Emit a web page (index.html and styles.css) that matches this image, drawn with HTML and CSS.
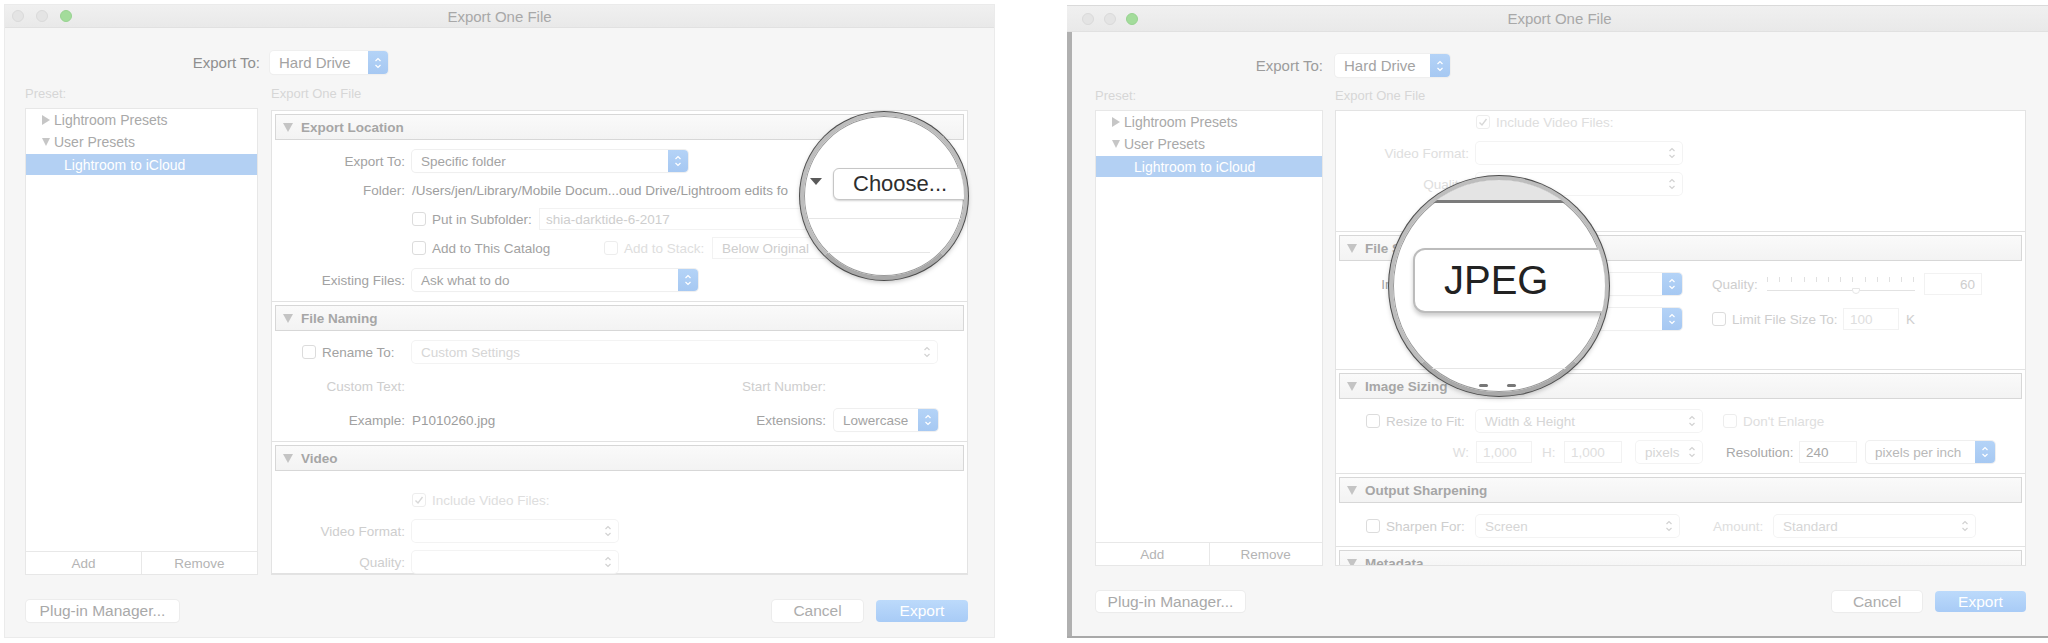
FILE: index.html
```html
<!DOCTYPE html>
<html lang="en">
<head>
    <meta charset="UTF-8">
    <title>Export One File</title>
    <link rel="stylesheet" href="styles.css">
</head>
<body>
<div class="screen">

    <!-- left dialog: export location -->
    <div class="window win-left">
        <div class="titlebar">
            <div class="lights"><i class="light"></i><i class="light"></i><i class="light green"></i></div>
            <div class="title">Export One File</div>
            <div></div>
        </div>
        <div class="win-body">
            <div class="export-to">
                <span class="lbl-top">Export To:</span>
                <div class="popup big"><span class="txt">Hard Drive</span><span class="stepper blue"><svg class="chev" viewBox="0 0 8 14"><path d="M1.5 5 4 2.5 6.5 5M1.5 9 4 11.5 6.5 9"/></svg></span></div>
            </div>
            <div class="columns">
                <div class="preset-col">
                    <div class="caption">Preset:</div>
                    <div class="preset-box">
                        <div class="tree">
                            <div class="tree-row"><i class="tri-right"></i>Lightroom Presets</div>
                            <div class="tree-row"><i class="tri-small"></i>User Presets</div>
                            <div class="tree-row selected">Lightroom to iCloud</div>
                        </div>
                        <div class="preset-btns"><span>Add</span><span>Remove</span></div>
                    </div>
                </div>
                <div class="main-col">
                    <div class="caption">Export One File</div>
                    <div class="panel">
                        <div class="section">
                            <div class="sec-head"><i class="tri-down"></i>Export Location</div>
                            <div class="sec-body loc">
                                <div class="row">
                                    <span class="lbl">Export To:</span>
                                    <div class="popup w276"><span class="txt">Specific folder</span><span class="stepper blue"><svg class="chev" viewBox="0 0 8 14"><path d="M1.5 5 4 2.5 6.5 5M1.5 9 4 11.5 6.5 9"/></svg></span></div>
                                </div>
                                <div class="row">
                                    <span class="lbl">Folder:</span>
                                    <span class="path">/Users/jen/Library/Mobile Docum...oud Drive/Lightroom edits fo</span>
                                </div>
                                <div class="row">
                                    <span class="lbl"></span>
                                    <i class="cb"></i><span class="cb-text sub-text">Put in Subfolder:</span>
                                    <div class="field sub-field dim">shia-darktide-6-2017</div>
                                </div>
                                <div class="row">
                                    <span class="lbl"></span>
                                    <i class="cb"></i><span class="cb-text cat-text">Add to This Catalog</span>
                                    <i class="cb faint-box"></i><span class="cb-text stack-text faint">Add to Stack:</span>
                                    <div class="field below-field dim">Below Original</div>
                                </div>
                                <div class="row push">
                                    <span class="lbl">Existing Files:</span>
                                    <div class="popup w286"><span class="txt">Ask what to do</span><span class="stepper blue"><svg class="chev" viewBox="0 0 8 14"><path d="M1.5 5 4 2.5 6.5 5M1.5 9 4 11.5 6.5 9"/></svg></span></div>
                                </div>
                            </div>
                        </div>
                        <div class="section">
                            <div class="sec-head"><i class="tri-down"></i>File Naming</div>
                            <div class="sec-body naming">
                                <div class="row">
                                    <span class="lbl cb-lbl"><i class="cb"></i><span class="cb-text">Rename To:</span></span>
                                    <div class="popup w525 off"><span class="txt">Custom Settings</span><span class="stepper"><svg class="chev" viewBox="0 0 8 14"><path d="M1.5 5 4 2.5 6.5 5M1.5 9 4 11.5 6.5 9"/></svg></span></div>
                                </div>
                                <div class="row">
                                    <span class="lbl dim">Custom Text:</span>
                                    <span class="spacer"></span>
                                    <span class="lbl2 dim">Start Number:</span>
                                    <span class="blank w104 row-end"></span>
                                </div>
                                <div class="row">
                                    <span class="lbl">Example:</span>
                                    <span class="value">P1010260.jpg</span>
                                    <span class="spacer"></span>
                                    <span class="lbl2">Extensions:</span>
                                    <div class="popup w104 row-end"><span class="txt">Lowercase</span><span class="stepper blue"><svg class="chev" viewBox="0 0 8 14"><path d="M1.5 5 4 2.5 6.5 5M1.5 9 4 11.5 6.5 9"/></svg></span></div>
                                </div>
                            </div>
                        </div>
                        <div class="section">
                            <div class="sec-head"><i class="tri-down"></i>Video</div>
                            <div class="sec-body video">
                                <div class="row">
                                    <span class="lbl"></span>
                                    <i class="cb faint-box checked"><svg viewBox="0 0 12 12"><path d="M2.5 6.5 5 9 9.5 3"/></svg></i><span class="cb-text faint">Include Video Files:</span>
                                </div>
                                <div class="row">
                                    <span class="lbl dim">Video Format:</span>
                                    <div class="popup w206 off"><span class="txt"></span><span class="stepper"><svg class="chev" viewBox="0 0 8 14"><path d="M1.5 5 4 2.5 6.5 5M1.5 9 4 11.5 6.5 9"/></svg></span></div>
                                </div>
                                <div class="row">
                                    <span class="lbl dim">Quality:</span>
                                    <div class="popup w206 off"><span class="txt"></span><span class="stepper"><svg class="chev" viewBox="0 0 8 14"><path d="M1.5 5 4 2.5 6.5 5M1.5 9 4 11.5 6.5 9"/></svg></span></div>
                                </div>
                            </div>
                        </div>
                    </div>
                </div>
            </div>
            <div class="footer">
                <div class="btn plugin">Plug-in Manager...</div>
                <div class="btn cancel">Cancel</div>
                <div class="btn export">Export</div>
            </div>
        </div>

        <div class="loupe loupe-choose">
            <i class="loupe-tri"></i>
            <div class="loupe-btn">Choose...</div>
            <i class="loupe-line l1"></i>
            <i class="loupe-line l2"></i>
        </div>
    </div>

    <!-- right dialog: scrolled to file settings -->
    <div class="window win-right">
        <div class="titlebar">
            <div class="lights"><i class="light"></i><i class="light"></i><i class="light green"></i></div>
            <div class="title">Export One File</div>
            <div></div>
        </div>
        <div class="win-body">
            <div class="export-to">
                <span class="lbl-top">Export To:</span>
                <div class="popup big"><span class="txt">Hard Drive</span><span class="stepper blue"><svg class="chev" viewBox="0 0 8 14"><path d="M1.5 5 4 2.5 6.5 5M1.5 9 4 11.5 6.5 9"/></svg></span></div>
            </div>
            <div class="columns">
                <div class="preset-col">
                    <div class="caption">Preset:</div>
                    <div class="preset-box">
                        <div class="tree">
                            <div class="tree-row"><i class="tri-right"></i>Lightroom Presets</div>
                            <div class="tree-row"><i class="tri-small"></i>User Presets</div>
                            <div class="tree-row selected">Lightroom to iCloud</div>
                        </div>
                        <div class="preset-btns"><span>Add</span><span>Remove</span></div>
                    </div>
                </div>
                <div class="main-col">
                    <div class="caption">Export One File</div>
                    <div class="panel">
                        <div class="section top-cut">
                            <div class="sec-body video-tail">
                                <div class="row">
                                    <span class="lbl"></span>
                                    <i class="cb faint-box checked"><svg viewBox="0 0 12 12"><path d="M2.5 6.5 5 9 9.5 3"/></svg></i><span class="cb-text faint">Include Video Files:</span>
                                </div>
                                <div class="row">
                                    <span class="lbl faint">Video Format:</span>
                                    <div class="popup w206 off"><span class="txt"></span><span class="stepper"><svg class="chev" viewBox="0 0 8 14"><path d="M1.5 5 4 2.5 6.5 5M1.5 9 4 11.5 6.5 9"/></svg></span></div>
                                </div>
                                <div class="row">
                                    <span class="lbl faint">Quality:</span>
                                    <div class="popup w206 off"><span class="txt"></span><span class="stepper"><svg class="chev" viewBox="0 0 8 14"><path d="M1.5 5 4 2.5 6.5 5M1.5 9 4 11.5 6.5 9"/></svg></span></div>
                                </div>
                            </div>
                        </div>
                        <div class="section">
                            <div class="sec-head"><i class="tri-down"></i>File Settings</div>
                            <div class="sec-body settings">
                                <div class="row">
                                    <span class="lbl">Image Format:</span>
                                    <div class="popup w206"><span class="txt"></span><span class="stepper blue"><svg class="chev" viewBox="0 0 8 14"><path d="M1.5 5 4 2.5 6.5 5M1.5 9 4 11.5 6.5 9"/></svg></span></div>
                                    <span class="q-lbl dim">Quality:</span>
                                    <div class="slider"><i class="thumb" style="left: 60%"></i></div>
                                    <div class="field num dim">60</div>
                                </div>
                                <div class="row">
                                    <span class="lbl"></span>
                                    <div class="popup w206"><span class="txt"></span><span class="stepper blue"><svg class="chev" viewBox="0 0 8 14"><path d="M1.5 5 4 2.5 6.5 5M1.5 9 4 11.5 6.5 9"/></svg></span></div>
                                    <i class="cb lim-cb"></i><span class="cb-text lim-text dim">Limit File Size To:</span>
                                    <div class="field k-field faint">100</div>
                                    <span class="unit dim">K</span>
                                </div>
                            </div>
                        </div>
                        <div class="section">
                            <div class="sec-head"><i class="tri-down"></i>Image Sizing</div>
                            <div class="sec-body sizing">
                                <div class="row">
                                    <span class="lbl cb-lbl"><i class="cb"></i><span class="cb-text dim">Resize to Fit:</span></span>
                                    <div class="popup w226 off"><span class="txt">Width &amp; Height</span><span class="stepper"><svg class="chev" viewBox="0 0 8 14"><path d="M1.5 5 4 2.5 6.5 5M1.5 9 4 11.5 6.5 9"/></svg></span></div>
                                    <i class="cb faint-box enlarge-cb"></i><span class="cb-text faint">Don't Enlarge</span>
                                </div>
                                <div class="row">
                                    <span class="lbl faint">W:</span>
                                    <div class="field w56 faint">1,000</div>
                                    <span class="h-lbl faint">H:</span>
                                    <div class="field w58 faint">1,000</div>
                                    <div class="popup w66 off px"><span class="txt">pixels</span><span class="stepper"><svg class="chev" viewBox="0 0 8 14"><path d="M1.5 5 4 2.5 6.5 5M1.5 9 4 11.5 6.5 9"/></svg></span></div>
                                    <span class="res-lbl">Resolution:</span>
                                    <div class="field w58 res-field">240</div>
                                    <div class="popup w129 ppi"><span class="txt">pixels per inch</span><span class="stepper blue"><svg class="chev" viewBox="0 0 8 14"><path d="M1.5 5 4 2.5 6.5 5M1.5 9 4 11.5 6.5 9"/></svg></span></div>
                                </div>
                            </div>
                        </div>
                        <div class="section">
                            <div class="sec-head"><i class="tri-down"></i>Output Sharpening</div>
                            <div class="sec-body sharpen">
                                <div class="row">
                                    <span class="lbl cb-lbl"><i class="cb"></i><span class="cb-text dim">Sharpen For:</span></span>
                                    <div class="popup w203 off"><span class="txt">Screen</span><span class="stepper"><svg class="chev" viewBox="0 0 8 14"><path d="M1.5 5 4 2.5 6.5 5M1.5 9 4 11.5 6.5 9"/></svg></span></div>
                                    <span class="amt-lbl faint">Amount:</span>
                                    <div class="popup w201 off"><span class="txt">Standard</span><span class="stepper"><svg class="chev" viewBox="0 0 8 14"><path d="M1.5 5 4 2.5 6.5 5M1.5 9 4 11.5 6.5 9"/></svg></span></div>
                                </div>
                            </div>
                        </div>
                        <div class="section">
                            <div class="sec-head"><i class="tri-down"></i>Metadata</div>
                        </div>
                    </div>
                </div>
            </div>
            <div class="footer">
                <div class="btn plugin">Plug-in Manager...</div>
                <div class="btn cancel">Cancel</div>
                <div class="btn export">Export</div>
            </div>
        </div>

        <div class="loupe loupe-jpeg">
            <i class="lj-band"></i>
            <div class="loupe-btn big">JPEG</div>
            <i class="loupe-line l3"></i>
            <i class="lj-mark m1"></i>
            <i class="lj-mark m2"></i>
        </div>
    </div>

</div>
</body>
</html>
```

FILE: styles.css
```css
* {
    box-sizing: border-box;
}
html, body {
    margin: 0;
}
body {
    width: 2048px;
    height: 643px;
    overflow: hidden;
    background-color: #fff;
    font-family: "Liberation Sans", Arial, sans-serif;
    font-size: 13.5px;
    color: #a2a2a2;
}
.screen {
    display: flex;
    align-items: flex-start;
}

/* windows */
.window {
    position: relative;
    flex-shrink: 0;
    display: flex;
    flex-direction: column;
    background-color: #f6f6f6;
}
.win-left {
    margin: 4px 0 0 4px;
    width: 991px;
    height: 634px;
    border: 1px solid #ebebeb;
}
.win-right {
    margin: 5px 0 0 72px;
    width: 985px;
    height: 633px;
    border-top: 1px solid #dadada;
    border-bottom: 2px solid #a9a9a9;
}
.titlebar {
    display: grid;
    grid-template-columns: 1fr auto 1fr;
    align-items: center;
    height: 23px;
    background: linear-gradient(#f0f0f0, #e9e9e9);
    border-bottom: 1px solid #e1e1e1;
    flex-shrink: 0;
}
.win-right .titlebar {
    height: 26px;
}
.lights {
    display: flex;
    gap: 12px;
    padding-left: 7px;
}
.win-right .lights {
    gap: 10px;
    padding-left: 15px;
}
.light {
    width: 12px;
    height: 12px;
    border-radius: 50%;
    background-color: #e4e4e4;
    border: 1px solid #dadada;
}
.light.green {
    background-color: #a3dc9b;
    border-color: #98d391;
}
.title {
    font-size: 15px;
    color: #a8a8a8;
}
.win-body {
    flex: 1;
    display: flex;
    flex-direction: column;
    padding: 23px 26px 0 20px;
}
.win-right .win-body {
    padding: 22px 26px 0 23px;
    border-left: 5px solid #b0b0b0;
}

/* export to */
.export-to {
    display: flex;
    align-items: center;
    gap: 10px;
    height: 23px;
}
.win-right .export-to {
    gap: 12px;
}
.lbl-top {
    width: 235px;
    text-align: right;
    font-size: 15px;
    color: #8f8f8f;
}
.win-right .lbl-top {
    width: 228px;
    color: #9c9c9c;
}
.popup.big {
    width: 118px;
    height: 23px;
    font-size: 15px;
}
.win-right .popup.big {
    width: 115px;
}

/* columns */
.columns {
    display: flex;
    gap: 13px;
    height: 489px;
    margin-top: 12px;
}
.win-right .columns {
    gap: 12px;
    height: 478px;
    margin-top: 11px;
}
.preset-col {
    width: 233px;
    display: flex;
    flex-direction: column;
}
.win-right .preset-col {
    width: 228px;
}
.main-col {
    flex: 1;
    display: flex;
    flex-direction: column;
}
.caption {
    height: 16px;
    line-height: 16px;
    font-size: 13px;
    color: #d6d6d6;
    margin-bottom: 6px;
}
.main-col .caption {
    margin-bottom: 8px;
}
.win-right .main-col .caption {
    margin-bottom: 6px;
}

/* preset list */
.preset-box {
    flex: 1;
    display: flex;
    flex-direction: column;
    background-color: #fff;
    border: 1px solid #e7e7e7;
}
.tree {
    flex: 1;
    font-size: 14px;
}
.tree-row {
    height: 22px;
    display: flex;
    align-items: center;
    gap: 4px;
    padding-left: 16px;
    color: #a9a9a9;
}
.tree-row.selected {
    background-color: #b3d0f3;
    color: #fff;
    padding-left: 38px;
    height: 21px;
    margin-top: 1px;
}
.tri-right {
    width: 0;
    height: 0;
    border-top: 5px solid transparent;
    border-bottom: 5px solid transparent;
    border-left: 8px solid #c6c6c6;
}
.tri-small {
    width: 0;
    height: 0;
    border-left: 4.5px solid transparent;
    border-right: 4.5px solid transparent;
    border-top: 8px solid #c6c6c6;
}
.preset-btns {
    display: flex;
    height: 23px;
    border-top: 1px solid #e8e8e8;
    color: #b4b4b4;
}
.preset-btns span {
    flex: 1;
    display: flex;
    align-items: center;
    justify-content: center;
}
.preset-btns span + span {
    border-left: 1px solid #e8e8e8;
}

/* right panel */
.panel {
    flex: 1;
    overflow: hidden;
    background-color: #fff;
    border: 1px solid #e3e3e3;
}
.section {
    padding-top: 3px;
    border-bottom: 1px solid #e2e2e2;
}
.section.top-cut {
    padding-top: 0;
}
.sec-head {
    height: 26px;
    margin: 0 3px;
    display: flex;
    align-items: center;
    gap: 8px;
    padding-left: 7px;
    background: linear-gradient(#fafafa, #f3f3f3);
    border: 1px solid #d7d7d7;
    font-weight: bold;
    color: #a6a6a6;
}
.tri-down {
    width: 0;
    height: 0;
    border-left: 5.5px solid transparent;
    border-right: 5.5px solid transparent;
    border-top: 9px solid #c4c4c4;
}
.sec-body {
    display: flex;
    flex-direction: column;
}
.sec-body.loc {
    padding: 10px 0 10px;
    gap: 7px;
}
.sec-body.naming {
    padding: 10px 0 10px;
    gap: 12px;
}
.sec-body.video {
    padding: 18px 0 0;
    gap: 9px;
}
.sec-body.video-tail {
    padding: 0 0 36px;
    gap: 9px;
}
.sec-body.settings {
    padding: 12px 0 39px;
    gap: 13px;
}
.sec-body.sizing {
    padding: 11px 0 10px;
    gap: 9px;
}
.sec-body.sharpen {
    padding: 12px 0 9px;
}
.row {
    display: flex;
    align-items: center;
    height: 22px;
    white-space: nowrap;
}
.row.push {
    margin-top: 3px;
}
.lbl {
    width: 133px;
    margin-right: 7px;
    flex-shrink: 0;
    text-align: right;
}
.lbl.cb-lbl {
    display: flex;
    align-items: center;
    padding-left: 30px;
    text-align: left;
}
.lbl2 {
    margin-right: 8px;
}
.spacer {
    flex: 1;
}
.row-end {
    margin-right: 29px;
}
.blank {
    height: 22px;
}
.path, .value {
    color: #9d9d9d;
}

/* controls */
.popup {
    display: flex;
    align-items: stretch;
    height: 22px;
    background-color: #fff;
    border-radius: 4px;
    box-shadow: 0 0 0 1px #efefef, 0 1px 1px rgba(0, 0, 0, 0.05);
    color: #a3a3a3;
}
.popup .txt {
    flex: 1;
    display: flex;
    align-items: center;
    padding-left: 9px;
    overflow: hidden;
}
.popup.off {
    box-shadow: 0 0 0 1px #f3f3f3;
}
.popup.off .txt {
    color: #d6d6d6;
}
.stepper {
    width: 20px;
    display: flex;
    align-items: center;
    justify-content: center;
    color: #d2d2d2;
}
.stepper.blue {
    background: linear-gradient(#b4d3f7, #a6c8f2);
    color: #fff;
    border-radius: 0 4px 4px 0;
}
.chev {
    width: 8px;
    height: 14px;
    fill: none;
    stroke: currentColor;
    stroke-width: 1.2;
}
.w276 { width: 276px; }
.w286 { width: 286px; }
.w525 { width: 525px; }
.w104 { width: 104px; }
.w206 { width: 206px; }
.w226 { width: 226px; }
.w203 { width: 203px; }
.w201 { width: 201px; }
.w129 { width: 129px; }
.w66 { width: 66px; }
.w56 { width: 56px; }
.w58 { width: 58px; }
.cb {
    width: 14px;
    height: 14px;
    flex-shrink: 0;
    border: 1px solid #dcdcdc;
    border-radius: 3px;
    background-color: #fff;
}
.cb.faint-box {
    border-color: #ededed;
}
.cb.checked svg {
    display: block;
    width: 12px;
    height: 12px;
    fill: none;
    stroke: #d8d8d8;
    stroke-width: 1.4;
}
.cb-text {
    margin-left: 6px;
}
.sub-text {
    width: 107px;
}
.cat-text {
    width: 172px;
}
.stack-text {
    width: 88px;
}
.field {
    height: 22px;
    display: flex;
    align-items: center;
    padding: 0 6px;
    background-color: #fff;
    border: 1px solid #f2f2f2;
}
.sub-field {
    width: 360px;
}
.below-field {
    width: 170px;
    padding-left: 9px;
}
.field.num {
    width: 58px;
    justify-content: flex-end;
    margin-left: 9px;
}
.res-field {
    color: #a8a8a8;
}
.q-lbl {
    width: 55px;
    margin-left: 30px;
}
.slider {
    position: relative;
    width: 148px;
    height: 14px;
    background:
        linear-gradient(#e2e2e2, #e2e2e2) left bottom / 100% 1px no-repeat,
        repeating-linear-gradient(to right, #e0e0e0 0 1px, transparent 1px 12.2px) left top / 100% 5px no-repeat;
}
.thumb {
    position: absolute;
    bottom: -3px;
    width: 8px;
    height: 6px;
    margin-left: -4px;
    background-color: #fff;
    border: 1px solid #e6e6e6;
    border-radius: 0 0 4px 4px;
}
.lim-cb {
    margin-left: 30px;
}
.lim-text {
    width: 105px;
}
.k-field {
    width: 56px;
    margin-left: 6px;
}
.unit {
    margin-left: 7px;
}
.enlarge-cb {
    margin-left: 21px;
}
.h-lbl {
    width: 32px;
    padding-left: 10px;
}
.popup.px {
    margin-left: 14px;
}
.res-lbl {
    width: 73px;
    margin-left: 24px;
    color: #a8a8a8;
}
.popup.ppi {
    margin-left: 9px;
}
.popup.ppi .txt {
    color: #b9b9b9;
}
.amt-lbl {
    width: 61px;
    margin-left: 34px;
}

/* footer buttons */
.footer {
    display: flex;
    align-items: center;
    gap: 13px;
    height: 22px;
    margin-top: 25px;
}
.btn {
    height: 22px;
    display: flex;
    align-items: center;
    justify-content: center;
    border-radius: 4px;
    background-color: #fff;
    box-shadow: 0 0 0 1px #ececec, 0 1px 1px rgba(0, 0, 0, 0.04);
    font-size: 15.5px;
    color: #a9a9a9;
}
.btn.plugin {
    width: 153px;
    margin-left: 1px;
}
.btn.cancel {
    width: 91px;
    margin-left: auto;
    color: #adadad;
}
.btn.export {
    width: 92px;
    background: linear-gradient(#bcdafb, #a8cbf6);
    box-shadow: none;
    color: #fff;
}
.win-right .btn.plugin {
    width: 149px;
}
.win-right .btn.cancel {
    width: 90px;
}
.win-right .btn.export {
    width: 91px;
}
.win-right .footer {
    height: 21px;
}
.win-right .btn {
    height: 21px;
}

/* magnifier loupes */
.loupe {
    position: absolute;
    overflow: hidden;
    border-radius: 50%;
    background-color: #fff;
    border: 4px solid #bdbdbd;
    border-bottom-color: #a9a9a9;
    box-shadow: 0 0 0 1px #4d4d4d, inset 0 0 0 1px #9a9a9a, 0 2px 5px rgba(0, 0, 0, 0.25);
}
.loupe-choose {
    left: 795px;
    top: 107px;
    width: 168px;
    height: 168px;
}
.loupe-jpeg {
    left: 322px;
    top: 170px;
    width: 220px;
    height: 220px;
}
.loupe-tri {
    position: absolute;
    left: 6px;
    top: 62px;
    width: 0;
    height: 0;
    border-left: 6px solid transparent;
    border-right: 6px solid transparent;
    border-top: 7px solid #5a5a5a;
}
.loupe-btn {
    position: absolute;
    left: 29px;
    top: 52px;
    width: 170px;
    height: 32px;
    padding-left: 19px;
    display: flex;
    align-items: center;
    background-color: #fff;
    border: 1px solid #c6c6c6;
    border-radius: 6px;
    box-shadow: 0 1px 2px rgba(0, 0, 0, 0.18);
    font-size: 22px;
    color: #2e2e2e;
}
.loupe-btn.big {
    left: 20px;
    top: 68px;
    width: 240px;
    height: 65px;
    padding-left: 29px;
    border: 2px solid #bcbcbc;
    border-radius: 12px;
    box-shadow: 0 3px 4px rgba(0, 0, 0, 0.2);
    font-size: 40px;
    color: #222;
}
.loupe-line {
    position: absolute;
    height: 1px;
    background-color: #e6e6e6;
}
.loupe-line.l1 {
    left: 4px;
    right: 0;
    top: 102px;
}
.loupe-line.l2 {
    left: 10px;
    width: 116px;
    top: 136px;
}
.loupe-line.l3 {
    left: 0;
    right: 0;
    top: 188px;
}
.lj-band {
    position: absolute;
    left: 0;
    right: 0;
    top: 0;
    height: 23px;
    background-color: #e4e4e4;
    border-bottom: 3px solid #7b7b7b;
}
.lj-mark {
    position: absolute;
    top: 204px;
    width: 9px;
    height: 3px;
    border-radius: 2px;
    background-color: #777;
}
.lj-mark.m1 {
    left: 86px;
}
.lj-mark.m2 {
    left: 114px;
}

/* text tones, kept last so they win over control colours */
.dim {
    color: #cecece;
}
.faint {
    color: #dedede;
}
```
